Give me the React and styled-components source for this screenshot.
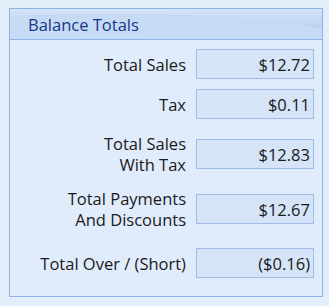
import styled, { createGlobalStyle } from "styled-components";

const GlobalStyle = createGlobalStyle`
  html, body {
    margin: 0;
    padding: 0;
    background: #e3eefb;
  }
  body {
    font-family: "Open Sans", "Noto Sans", sans-serif;
  }
`;

const totals = [
  { label: ["Total Sales"], value: "$12.72", gap: 9 },
  { label: ["Tax"], value: "$0.11", gap: 10 },
  { label: ["Total Sales", "With Tax"], value: "$12.83", gap: 14 },
  { label: ["Total Payments", "And Discounts"], value: "$12.67", gap: 13 },
  { label: ["Total Over / (Short)"], value: "($0.16)", gap: 18 },
];

const Page = styled.div`
  width: 329px;
  height: 306px;
  padding: 8px 0 0 9px;
  box-sizing: border-box;
`;

const Panel = styled.section`
  width: 314px;
  height: 289px;
  box-sizing: border-box;
  border: 1px solid #8fb3e4;
  background: #e0ecfb;
  display: flex;
  flex-direction: column;
`;

const Header = styled.div`
  height: 31px;
  box-sizing: border-box;
  border-bottom: 1px solid #8fb3e4;
  padding-left: 18px;
  display: flex;
  align-items: center;
  color: #15388a;
  font-size: 16.5px;
  font-weight: 500;
  background:
    radial-gradient(ellipse 75% 85% at 32% 100%, #c9dcf5 0%, #c6daf4 98%, transparent 100%),
    linear-gradient(to bottom, #d6e5f8 0%, #a9c6ee 100%);
`;

const Body = styled.div`
  display: flex;
  flex-direction: column;
  padding: 0 8px 0 10px;
`;

const Row = styled.div`
  display: grid;
  grid-template-columns: 1fr 118px;
  column-gap: 10px;
  align-items: center;
  margin-top: ${(p) => p.$gap}px;
`;

const Label = styled.div`
  text-align: right;
  font-size: 16.5px;
  font-weight: 500;
  line-height: 21px;
  color: #1a1a1a;
`;

const Value = styled.div`
  height: 30px;
  box-sizing: border-box;
  border: 1px solid #9dbce8;
  background: #d5e4f7;
  display: flex;
  align-items: center;
  justify-content: flex-end;
  padding-right: 3px;
  font-size: 16.5px;
  font-weight: 500;
  color: #1a1a1a;
`;

export default function App() {
  return (
    <Page>
      <GlobalStyle />
      <Panel>
        <Header>Balance Totals</Header>
        <Body>
          {totals.map((row) => (
            <Row key={row.value} $gap={row.gap}>
              <Label>
                {row.label.map((line) => (
                  <div key={line}>{line}</div>
                ))}
              </Label>
              <Value>{row.value}</Value>
            </Row>
          ))}
        </Body>
      </Panel>
    </Page>
  );
}
